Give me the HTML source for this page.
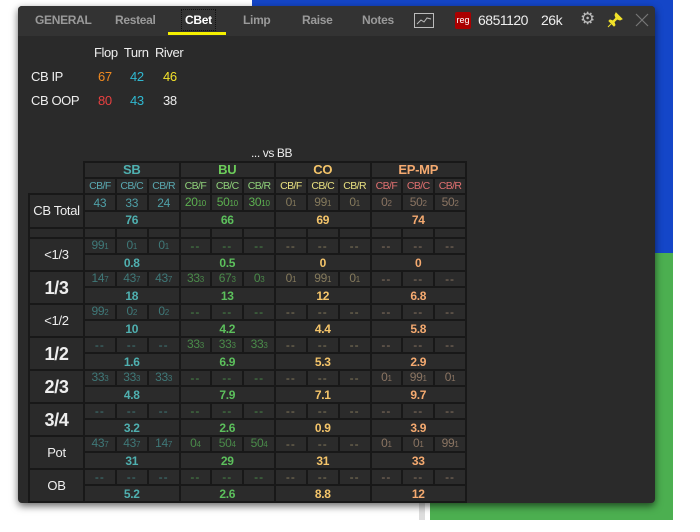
<!DOCTYPE html>
<html><head><meta charset="utf-8"><style>
*{margin:0;padding:0;box-sizing:border-box}
body{width:700px;height:532px;background:#fff;position:relative;overflow:hidden;font-family:"Liberation Sans",sans-serif}
.blue{position:absolute;left:252px;top:0;width:421px;height:253px;background:#1446c8}
.green{position:absolute;left:430px;top:253px;width:243px;height:267px;background:#4caf50}
.gl{position:absolute;left:419px;top:500px;width:6px;height:20px;background:#ddd}
.panel{position:absolute;left:18px;top:6px;width:637px;height:497px;background:#2a2a2a;border-radius:4px;box-shadow:0 3px 8px rgba(0,0,0,.6);overflow:hidden}
.hdr{position:absolute;left:0;top:0;width:637px;height:30px;background:#333}
.t{position:absolute;top:7px;font-size:12px;font-weight:bold;color:#9a9a9a;letter-spacing:-.3px}
.u{position:absolute;left:150px;top:26px;width:58px;height:3px;background:#f5f000}
.w{position:absolute;color:#eee;font-size:13px;letter-spacing:-.4px}
table{position:absolute;left:10px;top:155px;border-collapse:collapse;table-layout:fixed;width:437px}
td{border:2px solid #181818;background:#2b2b2b;text-align:center;font-size:12px;line-height:12px;padding:0;overflow:hidden;white-space:nowrap;letter-spacing:-.3px}
td.l{background:#2a2a2a;color:#eee;font-size:13px}
td.e{background:#2a2a2a;border:none}
td.d{letter-spacing:1px}
small{font-size:8px}
.s{color:#3f7878}.S{color:#4fb0b0;font-weight:bold}
.b{color:#4a8a4a}.B{color:#5cc05c;font-weight:bold}
.c{color:#857a5c}.C{color:#f5c56a;font-weight:bold}
.p{color:#8a7462}.P{color:#f5aa70;font-weight:bold}
.hs{color:#4fb0b0;font-weight:bold;font-size:13px}.hb{color:#6ccc5a;font-weight:bold;font-size:13px}.hc{color:#f5c56a;font-weight:bold;font-size:13px}.hp{color:#f5aa70;font-weight:bold;font-size:13px}
.ss,.sb,.sc,.sp{font-size:10.5px;letter-spacing:-.6px}
.ss{color:#5aa8b0}.sb{color:#8fd07a}.sc{color:#e8e080}.sp{color:#e07070}
.big{font-size:18px!important;font-weight:bold}
tr.h16{height:16px}tr.h17{height:17px}
</style></head><body>
<div class="blue"></div><div class="green"></div><div class="gl"></div>
<div class="panel">
<div class="hdr">
<span class="t" style="left:17px">GENERAL</span>
<span class="t" style="left:97px">Resteal</span>
<span class="t" style="left:167px;color:#fff;outline:1px dotted #111;outline-offset:3px">CBet</span>
<span class="t" style="left:225px">Limp</span>
<span class="t" style="left:284px">Raise</span>
<span class="t" style="left:344px">Notes</span>
<svg style="position:absolute;left:396px;top:7px" width="20" height="15"><rect x=".5" y=".5" width="19" height="14" fill="none" stroke="#bbb"/><path d="M3 11 L7 7 L10 9 L13 5 L17 6" fill="none" stroke="#bbb"/></svg>
<span style="position:absolute;left:437px;top:6px;width:16px;height:17px;background:#a00;color:#fff;font-size:9px;line-height:17px;text-align:center;border-radius:2px">reg</span>
<span class="w" style="left:460px;top:6px;font-size:14px;letter-spacing:-.5px">6851120</span>
<span class="w" style="left:523px;top:6px;font-size:14px;letter-spacing:-.5px">26k</span>
<span style="position:absolute;left:562px;top:3px;color:#bbb;font-size:17px">⚙</span>
<svg style="position:absolute;left:589px;top:6px" width="16" height="16"><path d="M9 1 L15 7 L13 8 L10 7 L7 10 L8 13 L7 14 L2 9 L3 8 L6 9 L9 6 L8 3 Z M4 12 L1 15" fill="#f2e22a" stroke="#f2e22a"/></svg>
<svg style="position:absolute;left:617px;top:7px" width="14" height="14"><path d="M1 1 L13 13 M13 1 L1 13" stroke="#777" stroke-width="1.2"/></svg>
</div>
<div class="u"></div>
<span class="w" style="left:76px;top:39px">Flop&nbsp; Turn&nbsp; River</span>
<span class="w" style="left:13px;top:63px">CB IP</span>
<span class="w" style="left:80px;top:63px;color:#f08a20">67</span>
<span class="w" style="left:112px;top:63px;color:#30b8d0">42</span>
<span class="w" style="left:145px;top:63px;color:#f2e22a">46</span>
<span class="w" style="left:13px;top:87px">CB OOP</span>
<span class="w" style="left:80px;top:87px;color:#e84040">80</span>
<span class="w" style="left:112px;top:87px;color:#30b8d0">43</span>
<span class="w" style="left:145px;top:87px">38</span>
<span class="w" style="left:233px;top:140px;font-size:12px">... vs BB</span>
<table>
<colgroup><col style="width:55px"><col span="12" style="width:31.83px"></colgroup>
<tr class="h16"><td class="e"></td><td colspan="3" class="hs">SB</td><td colspan="3" class="hb">BU</td><td colspan="3" class="hc">CO</td><td colspan="3" class="hp">EP-MP</td></tr>
<tr class="h16"><td class="e"></td><td class="ss">CB/F</td><td class="ss">CB/C</td><td class="ss">CB/R</td><td class="sb">CB/F</td><td class="sb">CB/C</td><td class="sb">CB/R</td><td class="sc">CB/F</td><td class="sc">CB/C</td><td class="sc">CB/R</td><td class="sp">CB/F</td><td class="sp">CB/C</td><td class="sp">CB/R</td></tr>
<tr class="h17"><td class="l" rowspan="2">CB Total</td><td class="s" style="color:#4fa0a8">43</td><td class="s" style="color:#4fa0a8">33</td><td class="s" style="color:#4fa0a8">24</td><td class="b" style="color:#5cb050">20<small>10</small></td><td class="b" style="color:#5cb050">50<small>10</small></td><td class="b" style="color:#5cb050">30<small>10</small></td><td class="c">0<small>1</small></td><td class="c">99<small>1</small></td><td class="c">0<small>1</small></td><td class="p">0<small>2</small></td><td class="p">50<small>2</small></td><td class="p">50<small>2</small></td></tr>
<tr class="h17"><td colspan="3" class="S">76</td><td colspan="3" class="B">66</td><td colspan="3" class="C">69</td><td colspan="3" class="P">74</td></tr>
<tr style="height:10px"><td class="l"></td><td></td><td></td><td></td><td></td><td></td><td></td><td></td><td></td><td></td><td></td><td></td><td></td></tr>
<tr class="h16"><td class="l" rowspan="2">&lt;1/3</td><td class="s">99<small>1</small></td><td class="s">0<small>1</small></td><td class="s">0<small>1</small></td><td class="b d">--</td><td class="b d">--</td><td class="b d">--</td><td class="c d">--</td><td class="c d">--</td><td class="c d">--</td><td class="p d">--</td><td class="p d">--</td><td class="p d">--</td></tr>
<tr class="h17"><td colspan="3" class="S">0.8</td><td colspan="3" class="B">0.5</td><td colspan="3" class="C">0</td><td colspan="3" class="P">0</td></tr>
<tr class="h16"><td class="l big" rowspan="2">1/3</td><td class="s">14<small>7</small></td><td class="s">43<small>7</small></td><td class="s">43<small>7</small></td><td class="b">33<small>3</small></td><td class="b">67<small>3</small></td><td class="b">0<small>3</small></td><td class="c">0<small>1</small></td><td class="c">99<small>1</small></td><td class="c">0<small>1</small></td><td class="p d">--</td><td class="p d">--</td><td class="p d">--</td></tr>
<tr class="h17"><td colspan="3" class="S">18</td><td colspan="3" class="B">13</td><td colspan="3" class="C">12</td><td colspan="3" class="P">6.8</td></tr>
<tr class="h16"><td class="l" rowspan="2">&lt;1/2</td><td class="s">99<small>2</small></td><td class="s">0<small>2</small></td><td class="s">0<small>2</small></td><td class="b d">--</td><td class="b d">--</td><td class="b d">--</td><td class="c d">--</td><td class="c d">--</td><td class="c d">--</td><td class="p d">--</td><td class="p d">--</td><td class="p d">--</td></tr>
<tr class="h17"><td colspan="3" class="S">10</td><td colspan="3" class="B">4.2</td><td colspan="3" class="C">4.4</td><td colspan="3" class="P">5.8</td></tr>
<tr class="h16"><td class="l big" rowspan="2">1/2</td><td class="s d">--</td><td class="s d">--</td><td class="s d">--</td><td class="b">33<small>3</small></td><td class="b">33<small>3</small></td><td class="b">33<small>3</small></td><td class="c d">--</td><td class="c d">--</td><td class="c d">--</td><td class="p d">--</td><td class="p d">--</td><td class="p d">--</td></tr>
<tr class="h17"><td colspan="3" class="S">1.6</td><td colspan="3" class="B">6.9</td><td colspan="3" class="C">5.3</td><td colspan="3" class="P">2.9</td></tr>
<tr class="h16"><td class="l big" rowspan="2">2/3</td><td class="s">33<small>3</small></td><td class="s">33<small>3</small></td><td class="s">33<small>3</small></td><td class="b d">--</td><td class="b d">--</td><td class="b d">--</td><td class="c d">--</td><td class="c d">--</td><td class="c d">--</td><td class="p">0<small>1</small></td><td class="p">99<small>1</small></td><td class="p">0<small>1</small></td></tr>
<tr class="h17"><td colspan="3" class="S">4.8</td><td colspan="3" class="B">7.9</td><td colspan="3" class="C">7.1</td><td colspan="3" class="P">9.7</td></tr>
<tr class="h16"><td class="l big" rowspan="2">3/4</td><td class="s d">--</td><td class="s d">--</td><td class="s d">--</td><td class="b d">--</td><td class="b d">--</td><td class="b d">--</td><td class="c d">--</td><td class="c d">--</td><td class="c d">--</td><td class="p d">--</td><td class="p d">--</td><td class="p d">--</td></tr>
<tr class="h17"><td colspan="3" class="S">3.2</td><td colspan="3" class="B">2.6</td><td colspan="3" class="C">0.9</td><td colspan="3" class="P">3.9</td></tr>
<tr class="h16"><td class="l" rowspan="2">Pot</td><td class="s">43<small>7</small></td><td class="s">43<small>7</small></td><td class="s">14<small>7</small></td><td class="b">0<small>4</small></td><td class="b">50<small>4</small></td><td class="b">50<small>4</small></td><td class="c d">--</td><td class="c d">--</td><td class="c d">--</td><td class="p">0<small>1</small></td><td class="p">0<small>1</small></td><td class="p">99<small>1</small></td></tr>
<tr class="h17"><td colspan="3" class="S">31</td><td colspan="3" class="B">29</td><td colspan="3" class="C">31</td><td colspan="3" class="P">33</td></tr>
<tr class="h16"><td class="l" rowspan="2">OB</td><td class="s d">--</td><td class="s d">--</td><td class="s d">--</td><td class="b d">--</td><td class="b d">--</td><td class="b d">--</td><td class="c d">--</td><td class="c d">--</td><td class="c d">--</td><td class="p d">--</td><td class="p d">--</td><td class="p d">--</td></tr>
<tr class="h17"><td colspan="3" class="S">5.2</td><td colspan="3" class="B">2.6</td><td colspan="3" class="C">8.8</td><td colspan="3" class="P">12</td></tr>
</table>
</div>
</body></html>
